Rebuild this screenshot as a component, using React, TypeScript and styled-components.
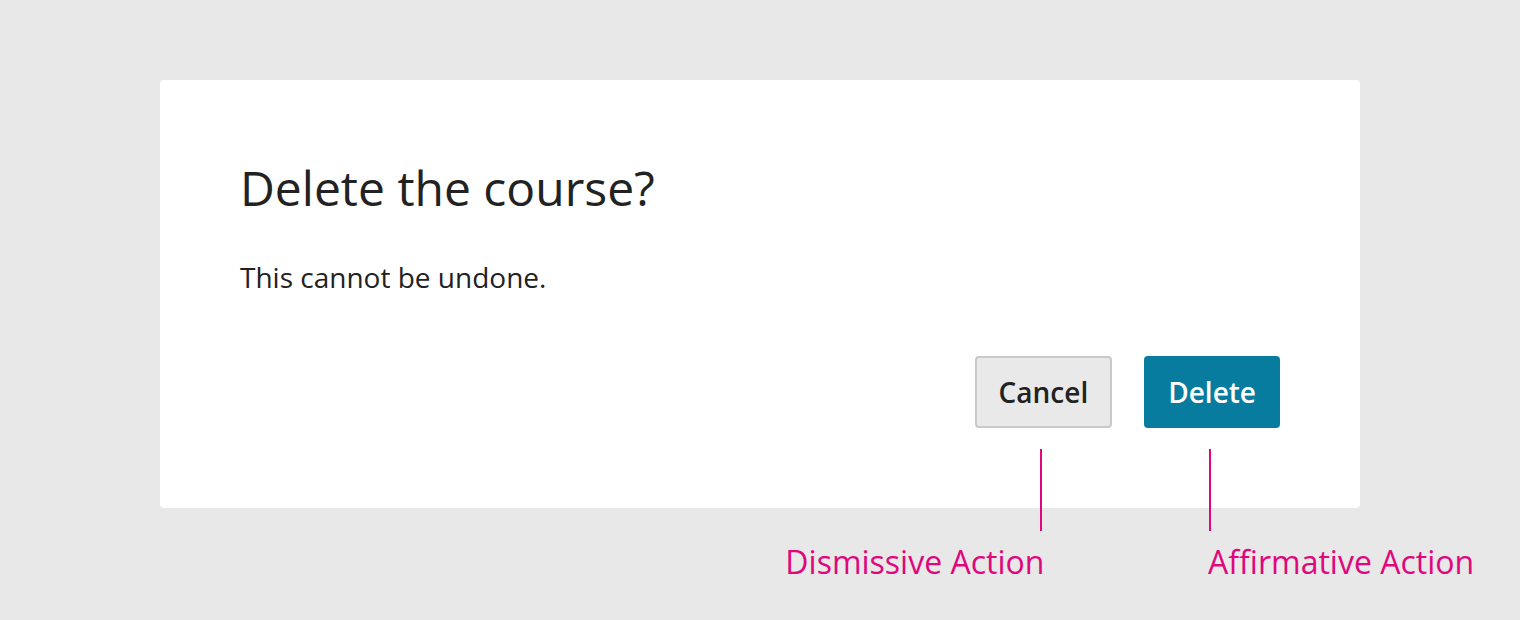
import styled, { createGlobalStyle } from "styled-components";

const GlobalStyle = createGlobalStyle`
  html, body {
    margin: 0;
    padding: 0;
    background-color: #e8e8e8;
    font-family: "Open Sans", "Noto Sans", sans-serif;
  }
`;

const Page = styled.div`
  padding: 80px 160px;
  min-height: 620px;
  box-sizing: border-box;
`;

const Dialog = styled.div`
  width: 1200px;
  box-sizing: border-box;
  padding: 80px 80px 80px 80px;
  background-color: #ffffff;
  border-radius: 4px;
`;

const Title = styled.h2`
  margin: 0;
  font-size: 48px;
  line-height: 56px;
  font-weight: 400;
  color: #222222;
`;

const Message = styled.p`
  margin: 43px 0 0;
  font-size: 28px;
  line-height: 36px;
  color: #222222;
`;

const Actions = styled.div`
  display: flex;
  justify-content: flex-end;
  gap: 32px;
  margin-top: 61px;
`;

const ActionSlot = styled.div`
  position: relative;
  display: flex;
`;

const Button = styled.button<{ primary?: boolean }>`
  height: 72px;
  padding: 0 22px;
  border: 2px solid ${({ primary }) => (primary ? "#077c9f" : "#c9c9c9")};
  border-radius: 4px;
  background-color: ${({ primary }) => (primary ? "#077c9f" : "#e9e9e9")};
  color: ${({ primary }) => (primary ? "#ffffff" : "#222222")};
  font-family: "Open Sans", sans-serif;
  font-size: 28px;
  font-weight: 600;
  line-height: 28px;
  cursor: pointer;
`;

const CalloutLine = styled.span`
  position: absolute;
  top: calc(100% + 21px);
  left: calc(50% - 3px);
  width: 2px;
  height: 82px;
  background-color: #e0077d;
`;

const CalloutLabel = styled.span<{ side: "left" | "right" }>`
  position: absolute;
  top: calc(100% + 118px);
  ${({ side }) =>
    side === "left" ? "right: calc(50% - 1px);" : "left: calc(50% - 4px);"}
  white-space: nowrap;
  font-size: 32px;
  line-height: 32px;
  font-weight: 400;
  color: #e0077d;
`;

const Callout = ({ label, side }: { label: string; side: "left" | "right" }) => (
  <>
    <CalloutLine />
    <CalloutLabel side={side}>{label}</CalloutLabel>
  </>
);

export default function App() {
  return (
    <>
      <GlobalStyle />
      <Page>
        <Dialog>
          <Title>Delete the course?</Title>
          <Message>This cannot be undone.</Message>
          <Actions>
            <ActionSlot>
              <Button>Cancel</Button>
              <Callout label="Dismissive Action" side="left" />
            </ActionSlot>
            <ActionSlot>
              <Button primary>Delete</Button>
              <Callout label="Affirmative Action" side="right" />
            </ActionSlot>
          </Actions>
        </Dialog>
      </Page>
    </>
  );
}
